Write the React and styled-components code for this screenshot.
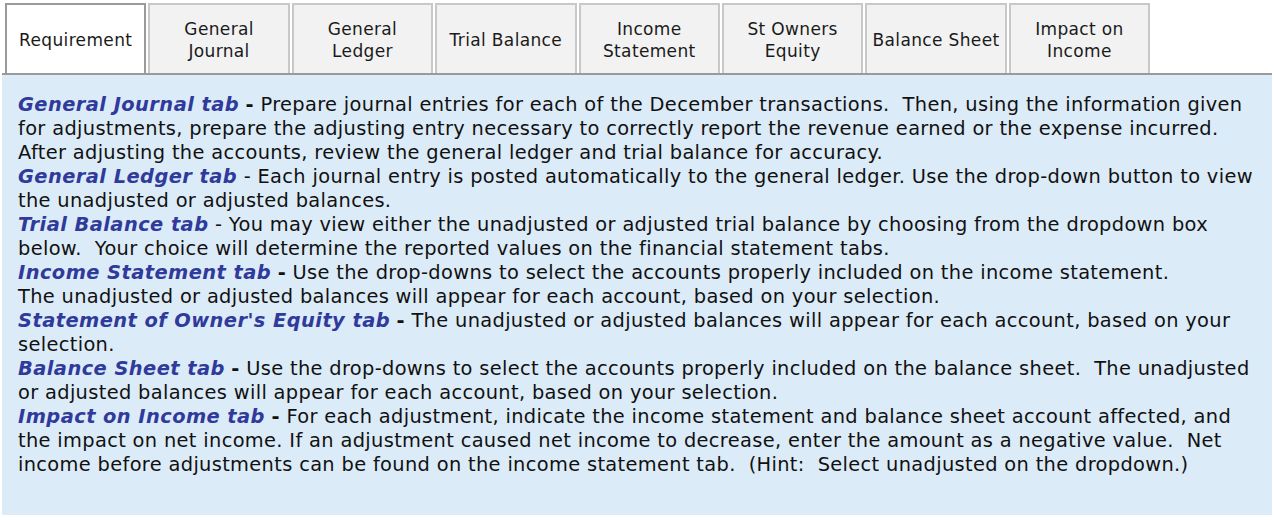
import React from 'react'
import styled, { createGlobalStyle } from 'styled-components'

const Global = createGlobalStyle`
  body {
    margin: 0;
    background: #fff;
    font-family: "DejaVu Sans", Verdana, sans-serif;
  }
`

const tabs = [
  ['Requirement'],
  ['General', 'Journal'],
  ['General', 'Ledger'],
  ['Trial Balance'],
  ['Income', 'Statement'],
  ['St Owners', 'Equity'],
  ['Balance Sheet'],
  ['Impact on', 'Income'],
]

const sections = [
  {
    title: 'General Journal tab',
    dash: true,
    lines: [
      'Prepare journal entries for each of the December transactions.  Then, using the information given',
      'for adjustments, prepare the adjusting entry necessary to correctly report the revenue earned or the expense incurred.',
      'After adjusting the accounts, review the general ledger and trial balance for accuracy.',
    ],
  },
  {
    title: 'General Ledger tab',
    lines: [
      'Each journal entry is posted automatically to the general ledger. Use the drop-down button to view',
      'the unadjusted or adjusted balances.',
    ],
  },
  {
    title: 'Trial Balance tab',
    lines: [
      'You may view either the unadjusted or adjusted trial balance by choosing from the dropdown box',
      'below.  Your choice will determine the reported values on the financial statement tabs.',
    ],
  },
  {
    title: 'Income Statement tab',
    dash: true,
    lines: [
      'Use the drop-downs to select the accounts properly included on the income statement.',
      'The unadjusted or adjusted balances will appear for each account, based on your selection.',
    ],
  },
  {
    title: "Statement of Owner's Equity tab",
    dash: true,
    lines: [
      'The unadjusted or adjusted balances will appear for each account, based on your',
      'selection.',
    ],
  },
  {
    title: 'Balance Sheet tab',
    dash: true,
    lines: [
      'Use the drop-downs to select the accounts properly included on the balance sheet.  The unadjusted',
      'or adjusted balances will appear for each account, based on your selection.',
    ],
  },
  {
    title: 'Impact on Income tab',
    dash: true,
    lines: [
      'For each adjustment, indicate the income statement and balance sheet account affected, and',
      'the impact on net income. If an adjustment caused net income to decrease, enter the amount as a negative value.  Net',
      'income before adjustments can be found on the income statement tab.  (Hint:  Select unadjusted on the dropdown.)',
    ],
  },
]

const Page = styled.div`
  padding: 3px 2px 5px 2px;
`

const TabBar = styled.div`
  display: flex;
  gap: 2px;
  padding-left: 3px;
  border-bottom: 2px solid #9a9a9a;
`

const Tab = styled.div`
  width: 141.4px;
  height: 70px;
  box-sizing: border-box;
  display: flex;
  align-items: center;
  justify-content: center;
  text-align: center;
  padding: 2px 6px 0;
  font-size: 17px;
  letter-spacing: 0.35px;
  line-height: 22px;
  color: #1a1a1a;
  background: ${p => (p.$active ? '#fff' : '#f2f2f2')};
  border: 2px solid ${p => (p.$active ? '#9a9a9a' : '#c8c8c8')};
  border-bottom: none;
  white-space: nowrap;
`

const Panel = styled.div`
  background: #dcebf8;
  height: 440px;
  box-sizing: border-box;
  padding: 18px 12px 0 16px;
  font-size: 19.4px;
  letter-spacing: 0.34px;
  line-height: 24px;
  color: #111;
`

const Section = styled.div`
  white-space: pre;
`

const Title = styled.span`
  color: #2f3a9b;
  font-weight: bold;
  font-style: italic;
  letter-spacing: 0.45px;
`

const Dash = styled.b`
  font-weight: bold;
`

export default function App() {
  return (
    <Page>
      <Global />
      <TabBar>
        {tabs.map((t, i) => (
          <Tab key={t.join(' ')} $active={i === 0}>
            <div>
              {t.map((l, j) => (
                <React.Fragment key={j}>
                  {j > 0 && <br />}
                  {l}
                </React.Fragment>
              ))}
            </div>
          </Tab>
        ))}
      </TabBar>
      <Panel>
        {sections.map(s => (
          <Section key={s.title}>
            <Title>{s.title}</Title> {s.dash ? <Dash>-</Dash> : '-'} {s.lines[0]}
            {s.lines.slice(1).map((l, i) => (
              <React.Fragment key={i}>
                {'\n'}
                {l}
              </React.Fragment>
            ))}
          </Section>
        ))}
      </Panel>
    </Page>
  )
}
